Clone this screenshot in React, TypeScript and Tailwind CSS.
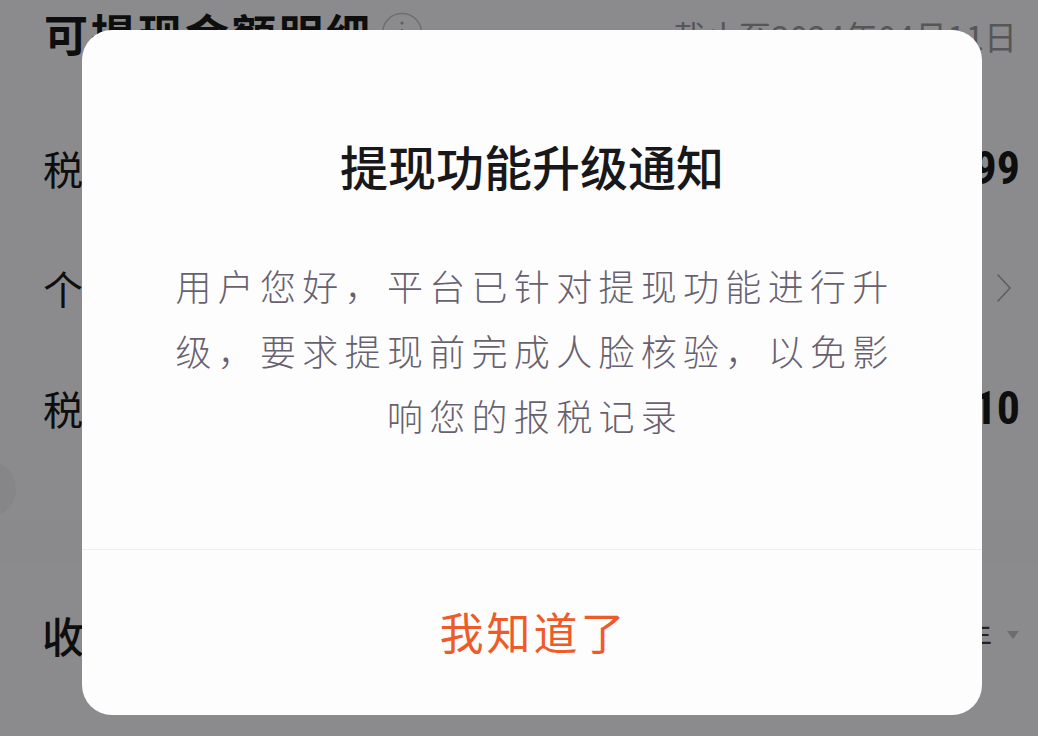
import React from "react";

const CJK = '"Noto Sans CJK SC", "Noto Sans", sans-serif';
const NUM = '"Liberation Sans Narrow", "Roboto Condensed", Roboto, "Noto Sans CJK SC", sans-serif';

function InfoIcon() {
  return (
    <svg width="42" height="42" viewBox="0 0 42 42" fill="none">
      <circle cx="21" cy="21" r="19.5" stroke="#6f6f71" strokeWidth="1.6" />
      <circle cx="21" cy="11" r="1.6" fill="#5f5f61" />
      <line x1="21" y1="17" x2="21" y2="30" stroke="#5f5f61" strokeWidth="2" />
    </svg>
  );
}

function Chevron() {
  return (
    <svg width="16" height="30" viewBox="0 0 16 30" fill="none">
      <polyline points="2,2 14,15 2,28" stroke="#5e5e60" strokeWidth="1.6" strokeLinejoin="round" strokeLinecap="round" />
    </svg>
  );
}

function Tri() {
  return (
    <svg width="14" height="10" viewBox="0 0 14 10">
      <polygon points="1,1 13,1 7,9" fill="#6c6c6e" />
    </svg>
  );
}

export default function App() {
  return (
    <div
      className="relative w-[1038px] h-[736px] overflow-hidden bg-[#8b8b8d]"
      style={{ fontFamily: CJK }}
    >
      {/* Background page (under the overlay) */}
      <div className="flex flex-col w-full">
        <div className="flex items-start h-[72px] pl-[44px] pr-[21px]">
          <div className="pt-[11px] text-[44px] leading-none font-bold tracking-[3px] text-[#0e0e0e]">
            可提现金额明细
          </div>
          <div className="ml-[8px] mt-[12px]">
            <InfoIcon />
          </div>
          <div className="ml-auto pt-[20px] text-[33px] leading-none text-[#565658]">
            截止至2024年04月11日
          </div>
        </div>

        <div className="mt-[36px] flex items-center h-[120px] pl-[43px] pr-[18px]">
          <div className="text-[40px] leading-none text-[#0e0e0e]">税后</div>
          <div className="ml-auto text-[46px] leading-none font-bold text-[#0e0e0e]" style={{ fontFamily: NUM }}>
            0.99
          </div>
        </div>

        <div className="flex items-center h-[120px] pl-[43px] pr-[26px]">
          <div className="text-[40px] leading-none text-[#0e0e0e]">个税</div>
          <div className="ml-auto">
            <Chevron />
          </div>
        </div>

        <div className="flex items-center h-[120px] pl-[43px] pr-[18px]">
          <div className="text-[40px] leading-none text-[#0e0e0e]">税前</div>
          <div className="ml-auto text-[46px] leading-none font-bold text-[#0e0e0e]" style={{ fontFamily: NUM }}>
            0.10
          </div>
        </div>

        <div className="flex items-start h-[52px]">
          <div className="-ml-[42px] -mt-[8px] w-[58px] h-[58px] rounded-full bg-[#868688]" />
        </div>

        <div className="h-[42px] bg-[#8a8a8c]" />

        <div className="flex items-center h-[146px] pl-[42px] pr-[18px]">
          <div className="text-[42px] leading-none font-medium text-[#0e0e0e]">收入</div>
          <div className="ml-auto flex items-center gap-[14px]">
            <span className="text-[30px] leading-none text-[#222224]">2024年</span>
            <Tri />
          </div>
        </div>
      </div>

      {/* Dialog */}
      <div className="absolute left-[82px] top-[30px] w-[900px] h-[685px] rounded-[30px] bg-[#fdfdfe] flex flex-col">
        <div className="h-[519px] flex flex-col items-center">
          <div className="mt-[111px] text-[48px] leading-none font-medium text-[#18181a]">
            提现功能升级通知
          </div>
          <div className="mt-[64px] w-[730px] pl-[6px] text-center text-[36px] leading-[65px] tracking-[6.3px] font-light text-[#67616f]">
            用户您好，平台已针对提现功能进行升级，要求提现前完成人脸核验，以免影响您的报税记录
          </div>
        </div>
        <div className="h-px bg-[#efeff1]" />
        <div className="flex-1 flex items-center justify-center pb-[4px]">
          <span className="text-[44px] leading-none font-normal tracking-[3px] pl-[3px] text-[#ef5b28]">
            我知道了
          </span>
        </div>
      </div>
    </div>
  );
}
